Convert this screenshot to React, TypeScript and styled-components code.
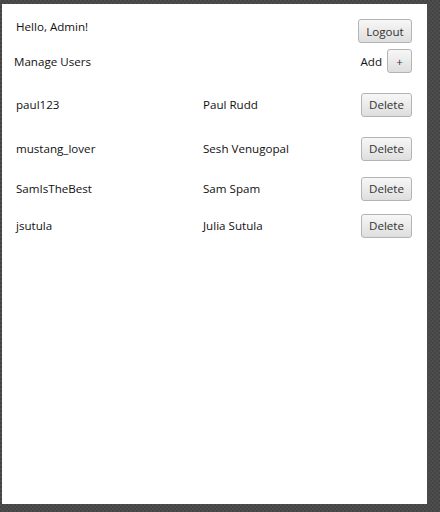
import React from 'react';
import styled, { createGlobalStyle } from 'styled-components';

const users = [
  { username: 'paul123', name: 'Paul Rudd', space: 19 },
  { username: 'mustang_lover', name: 'Sesh Venugopal', space: 19 },
  { username: 'SamIsTheBest', name: 'Sam Spam', space: 15 },
  { username: 'jsutula', name: 'Julia Sutula', space: 12 },
];

const App = () => {
  return (
    <>
      <GlobalStyle />
      <Window>
        <Header>
          <Greeting>Hello, Admin!</Greeting>
          <Button $width={54}>Logout</Button>
        </Header>
        <Toolbar>
          <Title>Manage Users</Title>
          <AddGroup>
            <label>Add</label>
            <Button $width={25}>+</Button>
          </AddGroup>
        </Toolbar>
        <UserList>
          {users.map((u, i) => (
            <UserRow key={u.username} $space={i === 0 ? 0 : u.space}>
              <Cell>{u.username}</Cell>
              <Cell>{u.name}</Cell>
              <Button $width={51}>Delete</Button>
            </UserRow>
          ))}
        </UserList>
      </Window>
    </>
  );
};

export default App;

const GlobalStyle = createGlobalStyle`
  html, body {
    margin: 0;
    padding: 0;
  }
  body {
    width: 440px;
    height: 512px;
    overflow: hidden;
    background-color: #484848;
    background-image: repeating-conic-gradient(#444 0 25%, #4e4e4e 0 50%);
    background-size: 4px 4px;
    font-family: 'Open Sans', 'Noto Sans', sans-serif;
  }
`;

const Window = styled.div`
  box-sizing: border-box;
  margin: 4px 0 0 2px;
  width: 425px;
  height: 500px;
  background: #fff;
  padding: 15px 15px 0 12px;
  color: #111;
  font-size: 11.6px;
  display: flex;
  flex-direction: column;
`;

const Header = styled.div`
  display: flex;
  justify-content: space-between;
  align-items: flex-start;
  height: 24px;
`;

const Greeting = styled.span`
  padding-left: 2px;
  line-height: 14px;
  margin-top: 1px;
`;

const Toolbar = styled.div`
  display: flex;
  justify-content: space-between;
  align-items: center;
  margin-top: 6px;
  height: 24px;
`;

const Title = styled.span`
  line-height: 14px;
  padding-top: 1px;
`;

const AddGroup = styled.div`
  display: flex;
  align-items: center;
  gap: 5px;
  label {
    padding-top: 1px;
  }
`;

const UserList = styled.div`
  display: flex;
  flex-direction: column;
  margin-top: 19px;
`;

const UserRow = styled.div<{ $space: number }>`
  display: grid;
  grid-template-columns: 187px 1fr auto;
  align-items: center;
  height: 25px;
  margin-top: ${(p) => p.$space}px;
  padding-left: 2px;
`;

const Cell = styled.span`
  line-height: 14px;
  padding-top: 1px;
`;

const Button = styled.button<{ $width: number }>`
  box-sizing: border-box;
  width: ${(p) => p.$width}px;
  height: 24px;
  padding: 0;
  border: 1px solid #b4b4b4;
  border-radius: 3px;
  background: linear-gradient(to bottom, #f7f7f7, #dedede);
  color: #333;
  font-family: 'Open Sans', 'Noto Sans', sans-serif;
  font-size: 11.6px;
`;
